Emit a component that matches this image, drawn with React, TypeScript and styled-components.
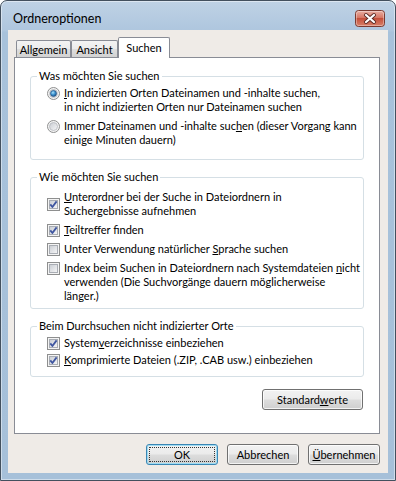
import styled, { createGlobalStyle } from 'styled-components'

const GlobalStyle = createGlobalStyle`
  html, body {
    margin: 0;
    padding: 0;
    background: #ffffff;
  }
  body {
    font-family: Lato, 'Noto Sans', sans-serif;
    font-size: 11px;
    color: #000;
  }
  * {
    box-sizing: border-box;
  }
`

const Window = styled.div`
  width: 396px;
  height: 481px;
  display: flex;
  flex-direction: column;
  border: 1px solid #43505e;
  border-radius: 7px 7px 0 0;
  background: linear-gradient(#bfd2e5 0, #aec6de 30px, #a8c2db 31px, #a6c0d9 100%);
  box-shadow: inset 0 0 0 1px rgba(255, 255, 255, 0.45);
  padding: 0 7px 7px;
`

const TitleBar = styled.div`
  height: 29px;
  padding: 5px 3px 0 5px;
  display: flex;
  align-items: center;
  justify-content: space-between;
`

const Title = styled.div`
  font-size: 12.5px;
  color: #000;
`

const Client = styled.div`
  flex: 1;
  display: flex;
  flex-direction: column;
  background: #efebe7;
  padding: 7px 8px 8px 6px;
`

const TabStrip = styled.div`
  height: 21px;
  margin-bottom: -1px;
  padding-left: 2px;
  display: flex;
  align-items: flex-end;
  position: relative;
  z-index: 1;
`

const Tab = styled.div<{ $active?: boolean; $width: number }>`
  width: ${(p) => p.$width}px;
  height: ${(p) => (p.$active ? '21px' : '17px')};
  margin-bottom: ${(p) => (p.$active ? '0' : '1px')};
  padding-top: ${(p) => (p.$active ? '2px' : '0')};
  border: 1px solid #898c95;
  border-bottom: none;
  border-radius: 2px 2px 0 0;
  background: ${(p) =>
    p.$active ? '#ffffff' : 'linear-gradient(#f3f3f3 0%, #ebebeb 50%, #dedede 51%, #d2d2d2 100%)'};
  display: flex;
  justify-content: center;
  align-items: ${(p) => (p.$active ? 'flex-start' : 'center')};
  line-height: 15px;
  & + & {
    border-left: ${(p) => (p.$active ? '1px solid #898c95' : 'none')};
  }
`

const Panel = styled.div`
  flex: 1;
  background: #ffffff;
  border: 1px solid #898c95;
  padding: 11px 15px 0 15px;
  display: flex;
  flex-direction: column;
`

const Group = styled.fieldset<{ $top: number; $bottom: number; $gap: number }>`
  margin: 0;
  min-width: 0;
  border: 1px solid #d5dfe5;
  border-radius: 3px;
  padding: ${(p) => `${p.$top}px 8px ${p.$bottom}px 16px`};
  display: flex;
  flex-direction: column;
  gap: ${(p) => p.$gap}px;
  & + & {
    margin-top: 10px;
  }
`

const Legend = styled.legend`
  margin-left: -10px;
  padding: 0 2px;
  line-height: 14px;
  color: #000;
`

const Option = styled.label<{ $center?: boolean }>`
  display: flex;
  align-items: ${(p) => (p.$center ? 'center' : 'flex-start')};
  gap: 4px;
  line-height: 14px;
  white-space: nowrap;
  & > svg {
    flex: none;
    margin-top: ${(p) => (p.$center ? '0' : '1px')};
  }
`

const Key = styled.span`
  text-decoration: underline;
  text-underline-offset: 1px;
`

const Button = styled.div<{ $width: number; $default?: boolean }>`
  position: relative;
  width: ${(p) => p.$width}px;
  height: 21px;
  border: 1px solid ${(p) => (p.$default ? '#3a86b4' : '#707070')};
  border-radius: 3px;
  background: linear-gradient(#f2f2f2 0%, #ebebeb 48%, #dddddd 52%, #cfcfcf 100%);
  box-shadow: inset 0 0 0 1px ${(p) => (p.$default ? '#9fdcf3' : 'rgba(255, 255, 255, 0.75)')};
  display: flex;
  align-items: center;
  justify-content: center;
  line-height: 14px;
  &::after {
    content: '';
    display: ${(p) => (p.$default ? 'block' : 'none')};
    position: absolute;
    inset: 2px;
    border: 1px dotted #333;
    border-radius: 1px;
  }
`

const PanelActions = styled.div`
  margin-top: 12px;
  padding-right: 1px;
  display: flex;
  justify-content: flex-end;
`

const DialogActions = styled.div`
  margin-top: 10px;
  display: flex;
  justify-content: flex-end;
  gap: 9px;
`

function CloseButton() {
  return (
    <svg width='30' height='17' viewBox='0 0 30 17'>
      <defs>
        <linearGradient id='closeBg' x1='0' y1='0' x2='0' y2='1'>
          <stop offset='0' stopColor='#eab2a6' />
          <stop offset='0.45' stopColor='#d67664' />
          <stop offset='0.5' stopColor='#c4503b' />
          <stop offset='1' stopColor='#d9826a' />
        </linearGradient>
      </defs>
      <rect x='0.5' y='0.5' width='29' height='16' rx='3' fill='url(#closeBg)' stroke='#7a3a30' />
      <rect x='1.5' y='1.5' width='27' height='14' rx='2' fill='none' stroke='rgba(255,255,255,0.35)' />
      <path d='M11 5 L19 12 M19 5 L11 12' stroke='#5a2a24' strokeWidth='4' strokeLinecap='round' />
      <path d='M11 5 L19 12 M19 5 L11 12' stroke='#ffffff' strokeWidth='2.2' strokeLinecap='round' />
    </svg>
  )
}

function CheckBox({ checked }: { checked?: boolean }) {
  return (
    <svg width='13' height='13' viewBox='0 0 13 13'>
      <defs>
        <linearGradient id='chkIn' x1='0' y1='0' x2='1' y2='1'>
          <stop offset='0' stopColor='#c8ccd2' />
          <stop offset='1' stopColor='#f7f7f8' />
        </linearGradient>
      </defs>
      <rect x='0.5' y='0.5' width='12' height='12' fill='#f4f4f4' stroke='#8e8f8f' />
      <rect x='2.5' y='2.5' width='8' height='8' fill='url(#chkIn)' stroke='#a9adb4' />
      {checked && (
        <path
          d='M3.3 6.4 L5.4 9 L9.6 3.4'
          fill='none'
          stroke='#3f56a0'
          strokeWidth='1.8'
          strokeLinejoin='round'
        />
      )}
    </svg>
  )
}

function Radio({ checked }: { checked?: boolean }) {
  return (
    <svg width='13' height='13' viewBox='0 0 13 13'>
      <defs>
        <linearGradient id='radIn' x1='0' y1='0' x2='1' y2='1'>
          <stop offset='0' stopColor='#c8ccd2' />
          <stop offset='1' stopColor='#f7f7f8' />
        </linearGradient>
        <radialGradient id='radDot' cx='0.4' cy='0.35' r='0.7'>
          <stop offset='0' stopColor='#a9e0fb' />
          <stop offset='0.5' stopColor='#3d93cf' />
          <stop offset='1' stopColor='#1b4f88' />
        </radialGradient>
      </defs>
      <circle cx='6.5' cy='6.5' r='6' fill='#f4f4f4' stroke='#8e8f8f' />
      <circle cx='6.5' cy='6.5' r='4' fill='url(#radIn)' stroke='#b5b8bd' strokeWidth='0.8' />
      {checked && <circle cx='6.5' cy='6.5' r='3' fill='url(#radDot)' stroke='#1f4c7d' strokeWidth='0.6' />}
    </svg>
  )
}

export default function App() {
  return (
    <>
      <GlobalStyle />
      <Window>
        <TitleBar>
          <Title>Ordneroptionen</Title>
          <CloseButton />
        </TitleBar>
        <Client>
          <TabStrip>
            <Tab $width={55}>Allgemein</Tab>
            <Tab $width={47}>Ansicht</Tab>
            <Tab $width={52} $active>
              Suchen
            </Tab>
          </TabStrip>
          <Panel>
            <Group $top={3} $bottom={12} $gap={5}>
              <Legend>Was möchten Sie suchen</Legend>
              <Option>
                <Radio checked />
                <span>
                  <Key>I</Key>n indizierten Orten Dateinamen und -inhalte suchen,
                  <br />
                  in nicht indizierten Orten nur Dateinamen suchen
                </span>
              </Option>
              <Option>
                <Radio />
                <span>
                  Immer Dateinamen und -inhalte suc<Key>h</Key>en (dieser Vorgang kann
                  <br />
                  einige Minuten dauern)
                </span>
              </Option>
            </Group>
            <Group $top={6} $bottom={5} $gap={5}>
              <Legend>Wie möchten Sie suchen</Legend>
              <Option $center>
                <CheckBox checked />
                <span>
                  <Key>U</Key>nterordner bei der Suche in Dateiordnern in
                  <br />
                  Suchergebnisse aufnehmen
                </span>
              </Option>
              <Option>
                <CheckBox checked />
                <span>
                  <Key>T</Key>eiltreffer finden
                </span>
              </Option>
              <Option>
                <CheckBox />
                <span>
                  Unter Verwendung natürlicher <Key>S</Key>prache suchen
                </span>
              </Option>
              <Option>
                <CheckBox />
                <span>
                  Index beim Suchen in Dateiordnern nach Systemdateien <Key>n</Key>icht
                  <br />
                  verwenden (Die Suchvorgänge dauern möglicherweise
                  <br />
                  länger.)
                </span>
              </Option>
            </Group>
            <Group $top={3} $bottom={9} $gap={3}>
              <Legend>Beim Durchsuchen nicht indizierter Orte</Legend>
              <Option>
                <CheckBox checked />
                <span>
                  System<Key>v</Key>erzeichnisse einbeziehen
                </span>
              </Option>
              <Option>
                <CheckBox checked />
                <span>
                  <Key>K</Key>omprimierte Dateien (.ZIP, .CAB usw.) einbeziehen
                </span>
              </Option>
            </Group>
            <PanelActions>
              <Button $width={101}>
                <span>
                  Standard<Key>w</Key>erte
                </span>
              </Button>
            </PanelActions>
          </Panel>
          <DialogActions>
            <Button $width={72} $default>
              OK
            </Button>
            <Button $width={72}>Abbrechen</Button>
            <Button $width={72}>
              <span>
                <Key>Ü</Key>bernehmen
              </span>
            </Button>
          </DialogActions>
        </Client>
      </Window>
    </>
  )
}
